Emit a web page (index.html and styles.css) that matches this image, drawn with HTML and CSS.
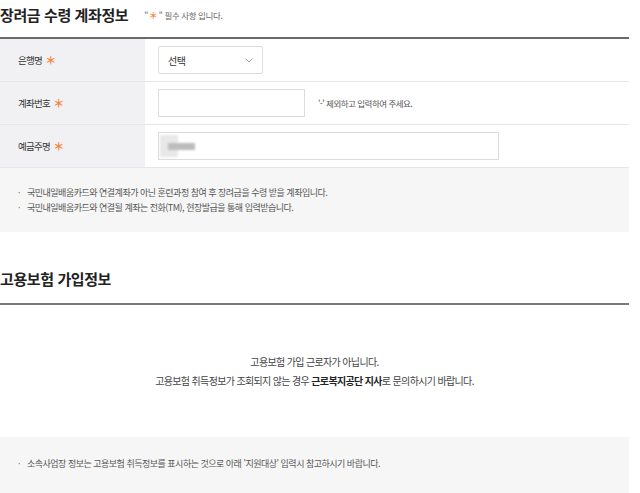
FILE: index.html
```html
<!DOCTYPE html>
<html lang="ko">
<head>
<meta charset="utf-8">
<link rel="stylesheet" href="styles.css">
</head>
<body>
<div class="page">
  <div class="sec-head">
    <h2 class="sec-title">장려금 수령 계좌정보</h2>
    <span class="req-note">"<em class="star">＊</em>" 필수 사항 입니다.</span>
  </div>

  <div class="form-table">
    <div class="row">
      <div class="th">은행명 <em class="star">＊</em></div>
      <div class="td">
        <div class="select">
          <span>선택</span>
          <svg class="chev" width="8" height="5" viewBox="0 0 8 5"><polyline points="0.5,0.5 4,4 7.5,0.5" fill="none" stroke="#a8a8a8" stroke-width="1"/></svg>
        </div>
      </div>
    </div>
    <div class="row">
      <div class="th">계좌번호 <em class="star">＊</em></div>
      <div class="td">
        <div class="input input-mid"></div>
        <span class="hint">'-' 제외하고 입력하여 주세요.</span>
      </div>
    </div>
    <div class="row">
      <div class="th">예금주명 <em class="star">＊</em></div>
      <div class="td">
        <div class="input input-long"><span class="blur-name"><span class="blur-a"></span><span class="blur-b"></span></span></div>
      </div>
    </div>
  </div>

  <ul class="notes">
    <li>국민내일배움카드와 연결계좌가 아닌 훈련과정 참여 후 장려금을 수령 받을 계좌입니다.</li>
    <li>국민내일배움카드와 연결될 계좌는 전화(TM), 현장발급을 통해 입력받습니다.</li>
  </ul>

  <div class="sec-head sec-head-2">
    <h2 class="sec-title">고용보험 가입정보</h2>
  </div>

  <div class="message">
    <p>고용보험 가입 근로자가 아닙니다.</p>
    <p>고용보험 취득정보가 조회되지 않는 경우 <strong>근로복지공단 지사</strong>로 문의하시기 바랍니다.</p>
  </div>

  <ul class="notes notes-2">
    <li>소속사업장 정보는 고용보험 취득정보를 표시하는 것으로 아래 '지원대상' 입력시 참고하시기 바랍니다.</li>
  </ul>
</div>
</body>
</html>
```

FILE: styles.css
```css
* { box-sizing: border-box; }

html, body {
  margin: 0;
  padding: 0;
  background: #fff;
}

body {
  font-family: "Noto Sans CJK KR", "Noto Sans", sans-serif;
  color: #333;
}

.page {
  width: 629px;
}

.sec-head {
  display: flex;
  align-items: center;
  gap: 16px;
  height: 37px;
  padding-bottom: 7px;
}

.sec-title {
  margin: 0;
  font-size: 15px;
  line-height: 30px;
  font-weight: 700;
  letter-spacing: -0.4px;
  color: #222;
}

.req-note {
  font-size: 8.5px;
  letter-spacing: -0.4px;
  color: #666;
  padding-top: 1px;
}

.star {
  font-style: normal;
  color: #f5873f;
  font-size: 11px;
  font-weight: 700;
  letter-spacing: 0;
}

.req-note .star {
  font-size: 9px;
  margin: 0 1px;
}

.form-table {
  border-top: 2px solid #6a6a6a;
}

.row {
  display: flex;
  height: 43px;
  border-bottom: 1px solid #e6e6e6;
}

.th {
  width: 145px;
  flex: none;
  background: #f1f1f4;
  display: flex;
  align-items: center;
  gap: 3px;
  padding-left: 18px;
  font-size: 9.5px;
  letter-spacing: -0.7px;
  color: #333;
}

.td {
  flex: 1;
  display: flex;
  align-items: center;
  padding-left: 13px;
  gap: 13px;
}

.select {
  width: 105px;
  height: 28px;
  border: 1px solid #dcdcdc;
  border-radius: 2px;
  display: flex;
  align-items: center;
  justify-content: space-between;
  padding: 0 9px 0 9px;
  font-size: 10px;
  letter-spacing: -0.4px;
  color: #333;
}

.chev { display: block; }

.input {
  height: 28px;
  border: 1px solid #dcdcdc;
  display: flex;
  align-items: center;
}

.input-mid { width: 147px; }
.input-long { width: 341px; }

.hint {
  font-size: 8.5px;
  letter-spacing: -0.5px;
  color: #555;
}

.blur-name {
  position: relative;
  display: block;
  width: 40px;
  height: 26px;
  margin-left: 1px;
  filter: blur(1.2px);
}

.blur-a {
  position: absolute;
  left: 0;
  top: 2px;
  width: 18px;
  height: 22px;
  background: #e8e8e8;
}

.blur-b {
  position: absolute;
  left: 8px;
  top: 10px;
  width: 27px;
  height: 7px;
  background: #bcbcbc;
}

.notes {
  margin: 0;
  list-style: none;
  background: #f6f6f6;
  padding: 17px 18px;
}

.notes li {
  display: flex;
  font-size: 9px;
  line-height: 15px;
  letter-spacing: -0.5px;
  color: #555;
}

.notes li::before {
  content: "·";
  width: 9px;
  flex: none;
  color: #777;
}

.sec-head-2 {
  margin-top: 33px;
  height: 40px;
  padding-bottom: 10px;
  border-bottom: 2px solid #7a7a7a;
}

.message {
  padding: 47px 0;
  text-align: center;
  height: 132px;
}

.message p {
  margin: 0;
  font-size: 10px;
  line-height: 19px;
  letter-spacing: -0.65px;
  color: #444;
}

.message strong {
  font-weight: 700;
  color: #222;
}

.notes-2 {
  padding: 19px 18px 30px;
}
```
